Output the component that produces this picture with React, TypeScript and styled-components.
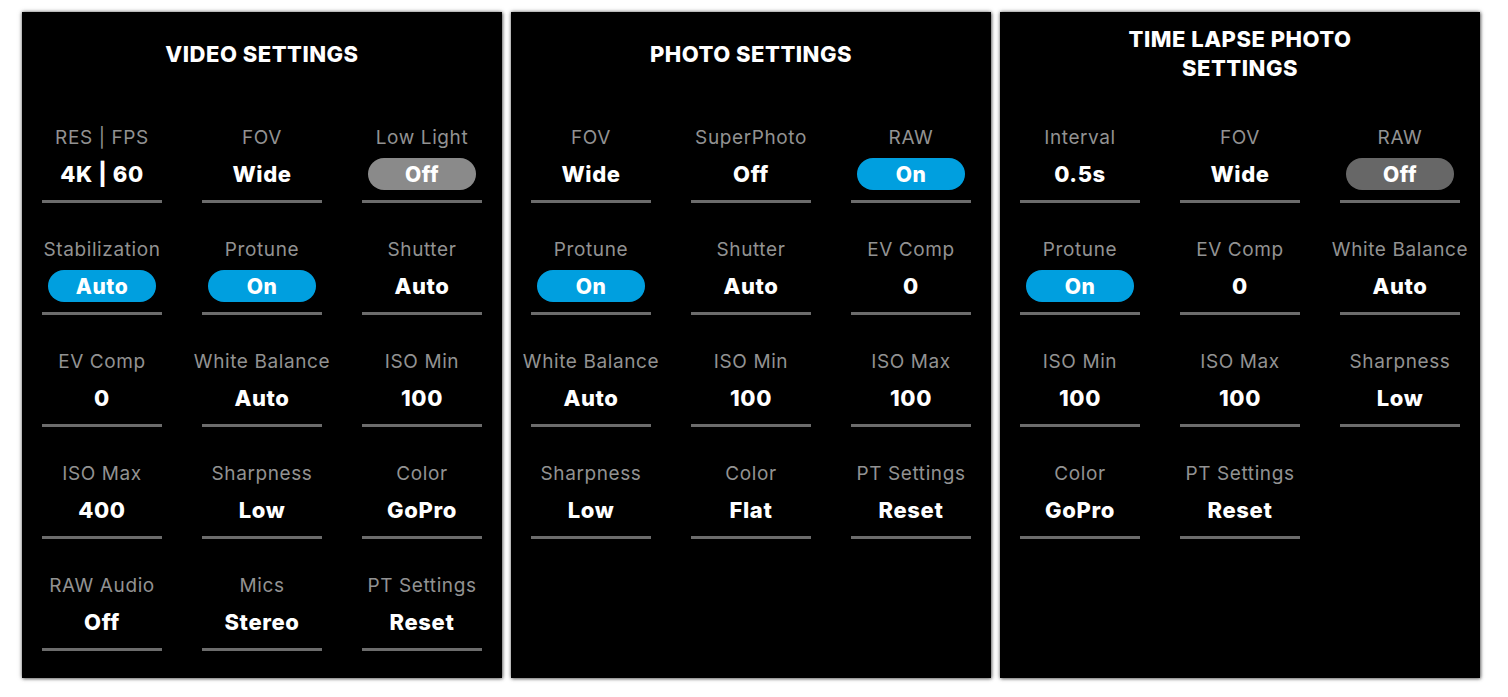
import React from "react";
import styled, { createGlobalStyle } from "styled-components";

const Global = createGlobalStyle`
  html, body { margin: 0; padding: 0; background: #ffffff; }
  body { font-family: Inter, "Open Sans", "Liberation Sans", sans-serif; }
`;

const Page = styled.div`
  display: flex;
  align-items: flex-start;
  gap: 9px;
  padding: 12px 0 19px 22px;
`;

const Panel = styled.section`
  width: 480px;
  height: 666px;
  box-sizing: border-box;
  background: #000;
  box-shadow: 0 0 4px rgba(0, 0, 0, 0.55), 1px 1px 3px rgba(0, 0, 0, 0.35);
  padding: 0 20px;
  display: flex;
  flex-direction: column;
  align-items: stretch;
`;

const TitleBox = styled.div`
  margin-top: 12px;
  height: 60px;
  display: flex;
  align-items: center;
  justify-content: center;
`;

const Title = styled.h2`
  margin: 0;
  max-width: 260px;
  text-align: center;
  color: #fff;
  font-size: 22px;
  font-weight: 800;
  line-height: 29px;
  letter-spacing: 0.5px;
`;

const Grid = styled.div`
  margin-top: 42px;
  display: grid;
  grid-template-columns: repeat(3, 120px);
  column-gap: 40px;
  row-gap: 35px;
`;

const Cell = styled.div`
  display: flex;
  flex-direction: column;
  align-items: center;
`;

const Label = styled.div`
  color: #929292;
  font-size: 19px;
  line-height: 24px;
  letter-spacing: 0.6px;
  white-space: nowrap;
`;

const ValueRow = styled.div`
  margin-top: 7px;
  height: 34px;
  display: flex;
  align-items: center;
  justify-content: center;
`;

const Value = styled.div`
  color: #fff;
  font-size: 22px;
  font-weight: 800;
  line-height: 34px;
  letter-spacing: 0.6px;
  white-space: nowrap;
`;

type Tone = "on" | "off" | "dim";

const toneColor: Record<Tone, string> = {
  on: "#009fdf",
  off: "#8a8a8a",
  dim: "#676767",
};

const Pill = styled.div<{ $tone: Tone }>`
  width: 108px;
  height: 32px;
  border-radius: 16px;
  background: ${(p) => toneColor[p.$tone]};
  color: #fff;
  font-size: 21px;
  font-weight: 800;
  letter-spacing: 0.5px;
  display: flex;
  align-items: center;
  justify-content: center;
`;

const Rule = styled.div`
  margin-top: 9px;
  width: 100%;
  height: 3px;
  background: #6c6c6c;
`;

type Item = { label: string; value: string; pill?: Tone };

const Setting: React.FC<Item> = ({ label, value, pill }) => (
  <Cell>
    <Label>{label}</Label>
    <ValueRow>
      {pill ? <Pill $tone={pill}>{value}</Pill> : <Value>{value}</Value>}
    </ValueRow>
    <Rule />
  </Cell>
);

const panels: { title: string; items: Item[] }[] = [
  {
    title: "VIDEO SETTINGS",
    items: [
      { label: "RES | FPS", value: "4K | 60" },
      { label: "FOV", value: "Wide" },
      { label: "Low Light", value: "Off", pill: "off" },
      { label: "Stabilization", value: "Auto", pill: "on" },
      { label: "Protune", value: "On", pill: "on" },
      { label: "Shutter", value: "Auto" },
      { label: "EV Comp", value: "0" },
      { label: "White Balance", value: "Auto" },
      { label: "ISO Min", value: "100" },
      { label: "ISO Max", value: "400" },
      { label: "Sharpness", value: "Low" },
      { label: "Color", value: "GoPro" },
      { label: "RAW Audio", value: "Off" },
      { label: "Mics", value: "Stereo" },
      { label: "PT Settings", value: "Reset" },
    ],
  },
  {
    title: "PHOTO SETTINGS",
    items: [
      { label: "FOV", value: "Wide" },
      { label: "SuperPhoto", value: "Off" },
      { label: "RAW", value: "On", pill: "on" },
      { label: "Protune", value: "On", pill: "on" },
      { label: "Shutter", value: "Auto" },
      { label: "EV Comp", value: "0" },
      { label: "White Balance", value: "Auto" },
      { label: "ISO Min", value: "100" },
      { label: "ISO Max", value: "100" },
      { label: "Sharpness", value: "Low" },
      { label: "Color", value: "Flat" },
      { label: "PT Settings", value: "Reset" },
    ],
  },
  {
    title: "TIME LAPSE PHOTO SETTINGS",
    items: [
      { label: "Interval", value: "0.5s" },
      { label: "FOV", value: "Wide" },
      { label: "RAW", value: "Off", pill: "dim" },
      { label: "Protune", value: "On", pill: "on" },
      { label: "EV Comp", value: "0" },
      { label: "White Balance", value: "Auto" },
      { label: "ISO Min", value: "100" },
      { label: "ISO Max", value: "100" },
      { label: "Sharpness", value: "Low" },
      { label: "Color", value: "GoPro" },
      { label: "PT Settings", value: "Reset" },
    ],
  },
];

export default function App() {
  return (
    <>
      <Global />
      <Page>
        {panels.map((p) => (
          <Panel key={p.title}>
            <TitleBox>
              <Title>{p.title}</Title>
            </TitleBox>
            <Grid>
              {p.items.map((it) => (
                <Setting key={it.label} {...it} />
              ))}
            </Grid>
          </Panel>
        ))}
      </Page>
    </>
  );
}
